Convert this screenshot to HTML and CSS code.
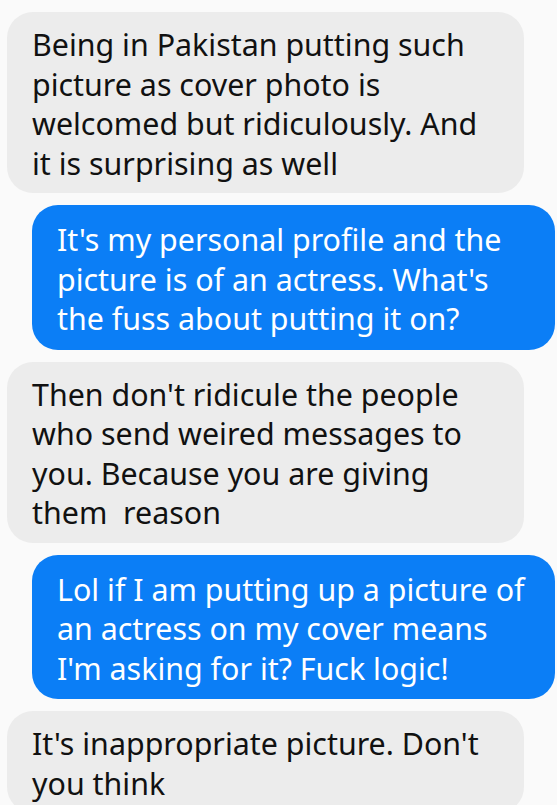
FILE: index.html
```html
<!DOCTYPE html>
<html lang="en">

<head>
    <meta charset="UTF-8">
    <meta name="viewport" content="width=device-width, initial-scale=1.0">
    <title>Messages</title>
    <link rel="stylesheet" href="styles.css">
</head>

<body>
    <div class="chat">
        <div class="msg in">Being in Pakistan putting such picture as cover photo is welcomed but ridiculously. And it is surprising as well</div>
        <div class="msg out">It's my personal profile and the picture is of an actress. What's the fuss about putting it on?</div>
        <div class="msg in">Then don't ridicule the people who send weired messages to you. Because you are giving them &nbsp;reason</div>
        <div class="msg out">Lol if I am putting up a picture of an actress on my cover means I'm asking for it? Fuck logic!</div>
        <div class="msg in">It's inappropriate picture. Don't you think</div>
    </div>
</body>

</html>
```
FILE: styles.css
```css
body {
    margin: 0;
    background-color: #fafafa;
    overflow: hidden;
}

.chat {
    display: flex;
    flex-direction: column;
    gap: 12px;
    padding-top: 12px;
}

.msg {
    font-family: "Noto Sans", sans-serif;
    font-size: 30.4px;
    line-height: 39.5px;
    border-radius: 26px;
}

.in {
    width: 517px;
    box-sizing: border-box;
    margin-left: 7px;
    padding: 13px 30px 10px 25px;
    background-color: #ececec;
    color: #111;
}

.out {
    width: 523px;
    box-sizing: border-box;
    margin-left: 32px;
    padding: 15px 22px 11px 25px;
    background-color: #0b7ef6;
    color: #fff;
}
```
